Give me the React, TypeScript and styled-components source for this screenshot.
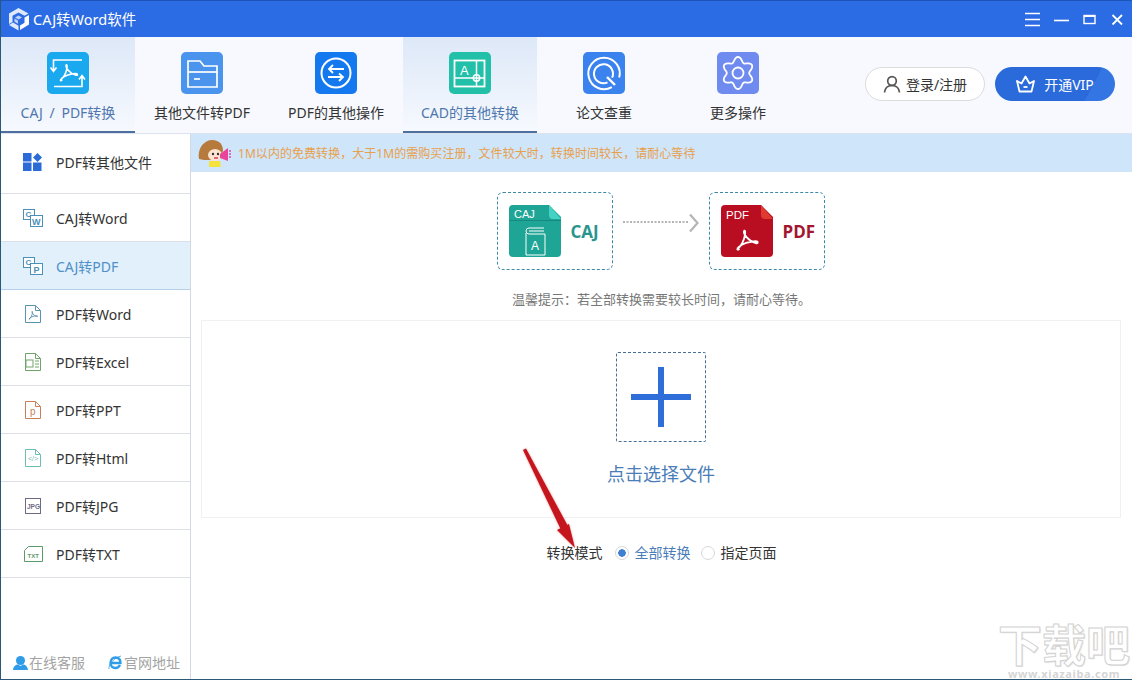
import { ReactNode } from "react";
import styled, { createGlobalStyle } from "styled-components";

const FONT = `"Noto Sans", "Noto Sans CJK SC", sans-serif`;

const GlobalStyle = createGlobalStyle`
    html, body {
        margin: 0;
        padding: 0;
        background: #fff;
    }
    * {
        box-sizing: border-box;
    }
`;

const Window = styled.div`
    position: relative;
    width: 1132px;
    height: 680px;
    display: flex;
    flex-direction: column;
    overflow: hidden;
    background: #fff;
    font-family: ${FONT};
    color: #333;
    border-left: 1px solid #2c5878;
    border-bottom: 1px solid #2c5878;
`;

const TitleBar = styled.div`
    height: 37px;
    flex: none;
    margin-left: -1px;
    display: flex;
    align-items: center;
    padding: 0 9px 0 7px;
    background: #2b6be4;
    border-top: 1px solid #1d54b8;
`;
const AppName = styled.div`
    margin-left: 3px;
    color: #fff;
    font-size: 14.5px;
    line-height: 20px;
`;
const WinControls = styled.div`
    margin-left: auto;
    display: flex;
    align-items: center;
    gap: 14px;
`;

const TabBar = styled.div`
    height: 97px;
    flex: none;
    display: flex;
    background: #f7f9fe;
    border-bottom: 1px solid #dbe3ee;
`;
const Tab = styled.div<{ $active?: boolean }>`
    width: 134px;
    height: 96px;
    display: flex;
    flex-direction: column;
    align-items: center;
    padding-top: 15px;
    background: ${(p) => (p.$active ? "linear-gradient(#dde8f8, #f6f9fe)" : "transparent")};
    border-bottom: 2px solid ${(p) => (p.$active ? "#4f6f9f" : "transparent")};
    color: ${(p) => (p.$active ? "#4f76ad" : "#333")};
    font-size: 14px;
`;
const TabIcon = styled.div<{ $color: string }>`
    width: 42px;
    height: 42px;
    border-radius: 5px;
    background: ${(p) => p.$color};
`;
const TabLabel = styled.div`
    margin-top: 9px;
    line-height: 20px;
    white-space: nowrap;
    word-spacing: 3px;
`;
const Account = styled.div`
    margin-left: auto;
    padding: 30px 17px 0 0;
    display: flex;
    gap: 10px;
`;
const LoginButton = styled.button`
    width: 120px;
    height: 34px;
    display: flex;
    align-items: center;
    justify-content: center;
    gap: 5px;
    padding: 0;
    border: 1px solid #dcdcdc;
    border-radius: 17px;
    background: #fff;
    color: #333;
    font-family: ${FONT};
    font-size: 14px;
`;
const VipButton = styled(LoginButton)`
    border: none;
    gap: 9px;
    background: linear-gradient(118deg, #2a6adb 0 78%, #3475e4 78% 100%);
    color: #fff;
`;

const Body = styled.div`
    flex: 1;
    min-height: 0;
    display: flex;
`;

const Sidebar = styled.div`
    width: 190px;
    flex: none;
    display: flex;
    flex-direction: column;
    border-right: 1px solid #d3d9e2;
`;
const SideRow = styled.div<{ $active?: boolean; $tall?: boolean }>`
    height: ${(p) => (p.$tall ? "60px" : "48px")};
    margin-left: -1px;
    flex: none;
    display: flex;
    align-items: center;
    padding: 0 0 ${(p) => (p.$tall ? "3px" : "0")} 23px;
    gap: 13px;
    font-size: 14px;
    background: ${(p) => (p.$active ? "#e2f0fb" : "transparent")};
    color: ${(p) => (p.$active ? "#4f8fca" : "#333")};
    border-bottom: 1px solid ${(p) => (p.$active ? "#b4cfe6" : "#dcdfe3")};
`;
const SideIcon = styled.div`
    width: 20px;
    height: 20px;
    flex: none;
    display: flex;
    align-items: center;
    justify-content: center;
`;
const SideFooter = styled.div`
    margin-top: auto;
    height: 34px;
    display: flex;
    align-items: center;
    padding-left: 12px;
    gap: 23px;
    font-size: 14px;
    color: #a3a3a3;
`;
const FooterLink = styled.div`
    display: flex;
    align-items: center;
    gap: 1px;
`;

const Main = styled.div`
    flex: 1;
    min-width: 0;
    display: flex;
    flex-direction: column;
`;
const Notice = styled.div`
    height: 38px;
    flex: none;
    display: flex;
    align-items: center;
    padding-left: 7px;
    gap: 6px;
    background: #cfe5fa;
    color: #e8a04a;
    font-size: 12px;
    letter-spacing: 0.05px;
`;
const Flow = styled.div`
    margin-top: 20px;
    padding-right: 2px;
    display: flex;
    justify-content: center;
    align-items: center;
    gap: 10px;
`;
const FileBox = styled.div<{ $color: string }>`
    width: 116px;
    height: 78px;
    display: flex;
    align-items: center;
    gap: 10px;
    padding: 0 0 0 11px;
    border: 1px dashed #3d8aa8;
    border-radius: 6px;
    color: ${(p) => p.$color};
    font-family: "Open Sans", sans-serif;
    font-size: 17px;
    font-weight: 700;
`;
const ArrowSlot = styled.div`
    height: 20px;
    margin-bottom: 17px;
`;
const Tip = styled.div`
    margin-top: 19px;
    text-align: center;
    font-size: 13px;
    line-height: 20px;
    color: #777;
`;
const UploadPanel = styled.div`
    margin: 11px 11px 0 10px;
    height: 198px;
    display: flex;
    flex-direction: column;
    align-items: center;
    padding-top: 31px;
    border: 1px solid #f0f1f3;
`;
const AddBox = styled.div`
    width: 90px;
    height: 90px;
    display: flex;
    align-items: center;
    justify-content: center;
    border: 1px dashed #4a6f94;
    border-radius: 2px;
`;
const Plus = styled.div`
    position: relative;
    width: 60px;
    height: 60px;
    &::before, &::after {
        content: "";
        position: absolute;
        background: #2f6ed8;
    }
    &::before {
        left: 0;
        right: 0;
        top: 27px;
        height: 6px;
    }
    &::after {
        top: 0;
        bottom: 0;
        left: 27px;
        width: 6px;
    }
`;
const PickText = styled.div`
    margin-top: 19px;
    font-size: 18px;
    line-height: 26px;
    color: #4a7db8;
`;
const ModeRow = styled.div`
    margin-top: 25px;
    display: flex;
    justify-content: center;
    align-items: center;
    font-size: 14px;
    line-height: 20px;
`;
const ModeLabel = styled.div`
    margin-right: 12px;
`;
const Radio = styled.div<{ $checked?: boolean }>`
    display: flex;
    align-items: center;
    gap: 6px;
    margin-right: 10px;
    color: ${(p) => (p.$checked ? "#4a7db8" : "#333")};
    &:last-child {
        margin-right: 0;
    }
`;
const RadioDot = styled.span<{ $checked?: boolean }>`
    width: 14px;
    height: 14px;
    border-radius: 50%;
    border: 1px solid #d5d8dc;
    background: ${(p) =>
        p.$checked ? "radial-gradient(circle, #3f7fd0 0 3.5px, #fff 4px)" : "#fff"};
`;

const ArrowMark = styled.svg`
    position: absolute;
    left: 515px;
    top: 440px;
    filter: drop-shadow(0 0 1px rgba(210, 40, 40, 0.45));
`;
const Watermark = styled.div`
    position: absolute;
    right: 0;
    bottom: 0;
    width: 136px;
    text-align: center;
    color: #fff;
    pointer-events: none;
`;
const WatermarkTitle = styled.div`
    font-size: 44px;
    line-height: 46px;
    font-weight: 700;
    white-space: nowrap;
    -webkit-text-stroke: 1px #d2d2d2;
    text-shadow: 1px 1px 1px #e4e4e4;
`;
const WatermarkUrl = styled.div`
    font-size: 11px;
    line-height: 11px;
    font-weight: 700;
    letter-spacing: 0.6px;
    color: #d5d5d5;
`;

function Logo() {
    return (
        <svg width="23" height="24" viewBox="0 0 23 24" fill="none">
            <path d="M11.5 1 21.5 6.5 17.5 8.8 11.5 5.4 5.5 8.8V15L2 17V6.5Z" fill="#fff" opacity=".85" />
            <path d="M2 18 6 15.6 11.5 18.8V23.5Z" fill="#dfe9fb" />
            <path d="M13 23 V18.5 L17.5 15.8 V10.6 L22 8 V17.5Z" fill="#fff" />
            <path d="M8 10.5 11.5 8.5 15 10.5 11.5 12.5Z M7.5 11.5 11 13.5V16.8L7.5 14.8Z" fill="#fff" opacity=".7" />
        </svg>
    );
}

function MenuIcon() {
    return (
        <svg width="15" height="15" viewBox="0 0 15 15" stroke="#fff" strokeWidth="1.6">
            <path d="M0 1.5H15M0 7.5H15M0 13.5H15" />
        </svg>
    );
}
function MinIcon() {
    return (
        <svg width="15" height="15" viewBox="0 0 15 15" stroke="#fff" strokeWidth="1.6">
            <path d="M0 8.5H15" />
        </svg>
    );
}
function MaxIcon() {
    return (
        <svg width="13" height="15" viewBox="0 0 13 15" fill="none" stroke="#fff" strokeWidth="1.4">
            <rect x="1" y="3.5" width="11" height="8" />
            <path d="M1 4H12" strokeWidth="2" />
        </svg>
    );
}
function CloseIcon() {
    return (
        <svg width="13" height="15" viewBox="0 0 13 15" stroke="#fff" strokeWidth="1.8">
            <path d="M2.5 3 12 12.5M12 3 2.5 12.5" />
        </svg>
    );
}

const Acrobat = ({ stroke = "#fff", sw = 1.5 }: { stroke?: string; sw?: number }) => (
    <path
        d="M4 19C7 18 10 12 10.5 7 10.7 4.5 10 4 9.6 5 9 7 13 13 19 14.5 21 15 21 13 19 13 14 13 8 15 5.5 17.5 3.5 19.5 4 20.5 6 19"
        fill="none"
        stroke={stroke}
        strokeWidth={sw}
    />
);

function IconConvert() {
    return (
        <svg width="42" height="42" viewBox="0 0 42 42" fill="none" stroke="#fff" strokeWidth="1.6">
            <path d="M35 8H6.500V19M3.500 15.500 6.500 19.500 9.500 15.500" />
            <path d="M7 34.500H35V24M32 27.500 35 23.500 38 27.500" />
            <g transform="translate(9 8) scale(1.05)">
                <Acrobat />
            </g>
        </svg>
    );
}
function IconFolder() {
    return (
        <svg width="42" height="42" viewBox="0 0 42 42" fill="none" stroke="#fff" strokeWidth="1.7">
            <path d="M7 35V9H19L23 14H36V35Z" />
            <path d="M7 20H36" />
            <path d="M13 27H19" />
        </svg>
    );
}
function IconSwap() {
    return (
        <svg width="42" height="42" viewBox="0 0 42 42" fill="none" stroke="#fff" strokeWidth="1.8">
            <circle cx="21" cy="21" r="14.5" strokeWidth="2" />
            <path d="M29 17H14M18 13 14 17 18 21" />
            <path d="M13 25H28M24 21.5 28 25 24 29" />
        </svg>
    );
}
function IconCad() {
    return (
        <svg width="42" height="42" viewBox="0 0 42 42" fill="none" stroke="#fff" strokeWidth="1.5">
            <rect x="5.5" y="8.5" width="30" height="26" strokeWidth="1.8" />
            <path d="M5.5 26H35.5M27.5 8.5V34.5" />
            <circle cx="27.5" cy="26" r="3.2" />
            <text x="11" y="23" fontSize="13" fill="#fff" stroke="none" fontFamily="Liberation Sans, sans-serif">A</text>
        </svg>
    );
}
function IconSearch() {
    return (
        <svg width="42" height="42" viewBox="0 0 42 42" fill="none" stroke="#fff" strokeWidth="2">
            <path d="M28.850 35.100A15.700 15.700 0 1 1 36.200 25.600" />
            <path d="M24.500 30.300A9.500 9.500 0 1 1 29.100 25.700" />
            <path d="M24 25 32 33" strokeWidth="2.400" />
        </svg>
    );
}

// six soft lobes round the centre, one of them pointing straight up
const gearOutline = Array.from({ length: 120 }, (_, i) => {
    const a = (i / 120) * Math.PI * 2;
    const r = 13.6 + 2.4 * Math.cos(6 * (a + Math.PI / 2));
    return `${(21 + r * Math.cos(a)).toFixed(2)},${(21 + r * Math.sin(a)).toFixed(2)}`;
}).join(" ");

function IconGear() {
    return (
        <svg width="42" height="42" viewBox="0 0 42 42" fill="none" stroke="#fff" strokeWidth="1.8">
            <polygon points={gearOutline} />
            <circle cx="21" cy="21" r="5.5" />
        </svg>
    );
}

function UserIcon() {
    return (
        <svg width="18" height="18" viewBox="0 0 18 18" fill="none" stroke="#555" strokeWidth="1.7">
            <circle cx="9" cy="6" r="4.3" />
            <path d="M1.500 17.500C2 13 5 10.500 9 10.500S16 13 16.500 17.500" />
        </svg>
    );
}
function CrownIcon() {
    return (
        <svg width="19" height="18" viewBox="0 0 19 18" fill="none" stroke="#fff" strokeWidth="1.8">
            <path d="M1 6 5.500 8.500 9.500 1.500 13.500 8.500 18 6 15.500 16.500H3.500Z" strokeLinejoin="round" />
            <path d="M7.500 12H11.500" />
        </svg>
    );
}

function GridIcon() {
    return (
        <svg width="20" height="18" viewBox="0 0 20 18" fill="#2a6bd8">
            <rect x="0" y="0" width="8.500" height="8.500" />
            <rect x="0" y="9.500" width="8.500" height="8.500" />
            <rect x="10" y="9.500" width="8.500" height="8.500" />
            <path d="M14.500 0 19 4.500 14.500 9 10 4.500Z" />
        </svg>
    );
}
function PairIcon({ letter }: { letter: string }) {
    return (
        <svg width="20" height="18" viewBox="0 0 20 18" fill="#fff" stroke="#4a90b8" strokeWidth="1">
            <rect x="0.500" y="0.500" width="11" height="10" />
            <text x="2.500" y="8" fontSize="8" fontWeight="700" fill="#4a90b8" stroke="none" fontFamily="Liberation Sans, sans-serif">C</text>
            <rect x="7.500" y="6.500" width="12" height="11" />
            <text x={letter === "W" ? 9 : 10.500} y="15.500" fontSize="9" fontWeight="700" fill="#4a90b8" stroke="none" fontFamily="Liberation Sans, sans-serif">{letter}</text>
        </svg>
    );
}
function DocIcon({ color, children }: { color: string; children?: ReactNode }) {
    return (
        <svg width="16" height="18" viewBox="0 0 16 18" fill="none" stroke={color} strokeWidth="1">
            <path d="M.500 .500H10.500L15.500 5.500V17.500H.500Z" />
            <path d="M10.500 .500V5.500H15.500" />
            {children}
        </svg>
    );
}
function JpgIcon() {
    return (
        <svg width="16" height="16" viewBox="0 0 16 16" fill="none" stroke="#6d6a85" strokeWidth="1">
            <rect x=".5" y=".5" width="15" height="15" />
            <text x="2" y="11" fontSize="6.500" fontWeight="700" fill="#6d6a85" stroke="none" fontFamily="Liberation Sans, sans-serif">JPG</text>
        </svg>
    );
}
function TxtIcon() {
    return (
        <svg width="19" height="16" viewBox="0 0 19 16" fill="none" stroke="#5d9a6a" strokeWidth="1">
            <path d="M.500 15.500V4.500L4.500 .500H18.500V15.500Z" />
            <text x="3.500" y="12" fontSize="6" fontWeight="700" fill="#5d9a6a" stroke="none" fontFamily="Liberation Sans, sans-serif">TXT</text>
        </svg>
    );
}

function ServiceIcon() {
    return (
        <svg width="15" height="15" viewBox="0 0 15 15" fill="#2e9ce8">
            <circle cx="7.500" cy="5.500" r="4.500" />
            <path d="M0 15C.5 11 3 9.500 5 9.500L7.500 11 10 9.500C12 9.500 14.500 11 15 15Z" />
        </svg>
    );
}
function IeIcon() {
    return (
        <svg width="15" height="15" viewBox="0 0 15 15" fill="none" stroke="#2e9ce8">
            <path d="M3 8H12.500C12.500 4.500 10.500 2.500 7.500 2.500S2.500 5 2.500 8 4.500 13 7.500 13C9.500 13 11 12 12 10" strokeWidth="2.400" />
            <path d="M1 14C0 11 5 3 13 1" strokeWidth=".8" />
        </svg>
    );
}

function Mascot() {
    return (
        <svg width="34" height="28" viewBox="0 0 34 28">
            <path d="M1 20C-1 10 6 1 14 1S25 6 25 12L20 21H6Z" fill="#b57a3c" />
            <ellipse cx="17" cy="16" rx="7" ry="6" fill="#fde3d0" />
            <circle cx="15" cy="15" r="1.200" fill="#333" />
            <circle cx="20" cy="15" r="1.200" fill="#333" />
            <path d="M16 19H20" stroke="#d3405c" strokeWidth="1.500" />
            <path d="M11 22H22L23 28H11Z" fill="#f5e23c" />
            <path d="M22 15 30 9V22L22 19Z" fill="#e8459a" />
            <path d="M32 11V20" stroke="#e8459a" strokeWidth="1.500" strokeDasharray="2 1" />
        </svg>
    );
}

function CajFile() {
    return (
        <svg width="52" height="52" viewBox="0 0 52 52" fontWeight="400">
            <path d="M4 0H40L52 12V48A4 4 0 0 1 48 52H4A4 4 0 0 1 0 48V4A4 4 0 0 1 4 0Z" fill="#1fa596" />
            <path d="M40 0 52 14H44A4 4 0 0 1 40 10Z" fill="#43d2c4" />
            <path d="M0 15.500H52" stroke="#168a7e" strokeWidth="1" />
            <text x="5" y="13" fontSize="11" fill="#fff" fontFamily="Liberation Sans, sans-serif">CAJ</text>
            <path d="M17 28V50H36V29H20A3 3 0 0 1 20 23H35M20 26H35" fill="none" stroke="#fff" strokeWidth="1" />
            <text x="22" y="45" fontSize="12" fill="#fff" fontFamily="Liberation Sans, sans-serif">A</text>
        </svg>
    );
}
function PdfFile() {
    return (
        <svg width="52" height="52" viewBox="0 0 52 52" fontWeight="400">
            <path d="M4 0H40L52 12V48A4 4 0 0 1 48 52H4A4 4 0 0 1 0 48V4A4 4 0 0 1 4 0Z" fill="#b90e22" />
            <path d="M40 0 52 14H44A4 4 0 0 1 40 10Z" fill="#e03a30" />
            <text x="5" y="14" fontSize="11.500" fill="#fff" fontFamily="Liberation Sans, sans-serif">PDF</text>
            <g transform="translate(11 20) scale(1.250)">
                <Acrobat sw={1.500} />
            </g>
        </svg>
    );
}
function FlowArrow() {
    return (
        <svg width="76" height="20" viewBox="0 0 76 20" fill="none" stroke="#b5b5b5">
            <path d="M0 9H66" strokeWidth="2" strokeDasharray="2 1.500" />
            <path d="M67 1.500 74.500 10 67 18.500" strokeWidth="2.200" />
        </svg>
    );
}

const tabs = [
    { label: "CAJ / PDF转换", color: "#1aa8ef", icon: <IconConvert />, active: true },
    { label: "其他文件转PDF", color: "#4a94ee", icon: <IconFolder /> },
    { label: "PDF的其他操作", color: "#1479ee", icon: <IconSwap /> },
    { label: "CAD的其他转换", color: "#22c0a8", icon: <IconCad />, active: true },
    { label: "论文查重", color: "#3a82ee", icon: <IconSearch /> },
    { label: "更多操作", color: "#6f8bf0", icon: <IconGear /> },
];

const small = { fontSize: 7, stroke: "none", fontFamily: "Liberation Sans, sans-serif" };

const menu = [
    { label: "CAJ转Word", icon: <PairIcon letter="W" /> },
    { label: "CAJ转PDF", icon: <PairIcon letter="P" />, active: true },
    {
        label: "PDF转Word",
        icon: (
            <DocIcon color="#5a93ad">
                <g transform="translate(2 4) scale(.52)">
                    <Acrobat stroke="#5a93ad" sw={1.800} />
                </g>
            </DocIcon>
        ),
    },
    {
        label: "PDF转Excel",
        icon: (
            <DocIcon color="#6fa56a">
                <rect x="1" y="7" width="7" height="7" />
                <path d="M10 8H14M10 11H14M10 14H14" />
            </DocIcon>
        ),
    },
    {
        label: "PDF转PPT",
        icon: (
            <DocIcon color="#c8805a">
                <text x="5" y="14" fill="#c8805a" {...small} fontSize={10}>p</text>
            </DocIcon>
        ),
    },
    {
        label: "PDF转Html",
        icon: (
            <DocIcon color="#6fbcb4">
                <text x="3" y="12" fill="#6fbcb4" {...small}>{"</>"}</text>
            </DocIcon>
        ),
    },
    { label: "PDF转JPG", icon: <JpgIcon /> },
    { label: "PDF转TXT", icon: <TxtIcon /> },
];

function App() {
    return (
        <Window>
            <GlobalStyle />
            <TitleBar>
                <Logo />
                <AppName>CAJ转Word软件</AppName>
                <WinControls>
                    <MenuIcon />
                    <MinIcon />
                    <MaxIcon />
                    <CloseIcon />
                </WinControls>
            </TitleBar>
            <TabBar>
                {tabs.map((tab) => (
                    <Tab key={tab.label} $active={tab.active}>
                        <TabIcon $color={tab.color}>{tab.icon}</TabIcon>
                        <TabLabel>{tab.label}</TabLabel>
                    </Tab>
                ))}
                <Account>
                    <LoginButton>
                        <UserIcon />
                        登录/注册
                    </LoginButton>
                    <VipButton>
                        <CrownIcon />
                        开通VIP
                    </VipButton>
                </Account>
            </TabBar>
            <Body>
                <Sidebar>
                    <SideRow $tall>
                        <SideIcon>
                            <GridIcon />
                        </SideIcon>
                        PDF转其他文件
                    </SideRow>
                    {menu.map((item) => (
                        <SideRow key={item.label} $active={item.active}>
                            <SideIcon>{item.icon}</SideIcon>
                            {item.label}
                        </SideRow>
                    ))}
                    <SideFooter>
                        <FooterLink>
                            <ServiceIcon />
                            在线客服
                        </FooterLink>
                        <FooterLink>
                            <IeIcon />
                            官网地址
                        </FooterLink>
                    </SideFooter>
                </Sidebar>
                <Main>
                    <Notice>
                        <Mascot />
                        1M以内的免费转换，大于1M的需购买注册，文件较大时，转换时间较长，请耐心等待
                    </Notice>
                    <Flow>
                        <FileBox $color="#2a958c">
                            <CajFile />
                            CAJ
                        </FileBox>
                        <ArrowSlot>
                            <FlowArrow />
                        </ArrowSlot>
                        <FileBox $color="#a3162e">
                            <PdfFile />
                            PDF
                        </FileBox>
                    </Flow>
                    <Tip>温馨提示：若全部转换需要较长时间，请耐心等待。</Tip>
                    <UploadPanel>
                        <AddBox>
                            <Plus />
                        </AddBox>
                        <PickText>点击选择文件</PickText>
                    </UploadPanel>
                    <ModeRow>
                        <ModeLabel>转换模式</ModeLabel>
                        <Radio $checked>
                            <RadioDot $checked />
                            全部转换
                        </Radio>
                        <Radio>
                            <RadioDot />
                            指定页面
                        </Radio>
                    </ModeRow>
                </Main>
            </Body>
            <ArrowMark width="70" height="120" viewBox="0 0 70 120">
                <path d="M7 10 10 8.500 53 88 46 92Z" fill="#c4161c" />
                <path d="M41 90 53 84 59 108Z" fill="#c4161c" />
            </ArrowMark>
            <Watermark>
                <WatermarkTitle>下载吧</WatermarkTitle>
                <WatermarkUrl>www.xiazaiba.com</WatermarkUrl>
            </Watermark>
        </Window>
    );
}

export default App;
